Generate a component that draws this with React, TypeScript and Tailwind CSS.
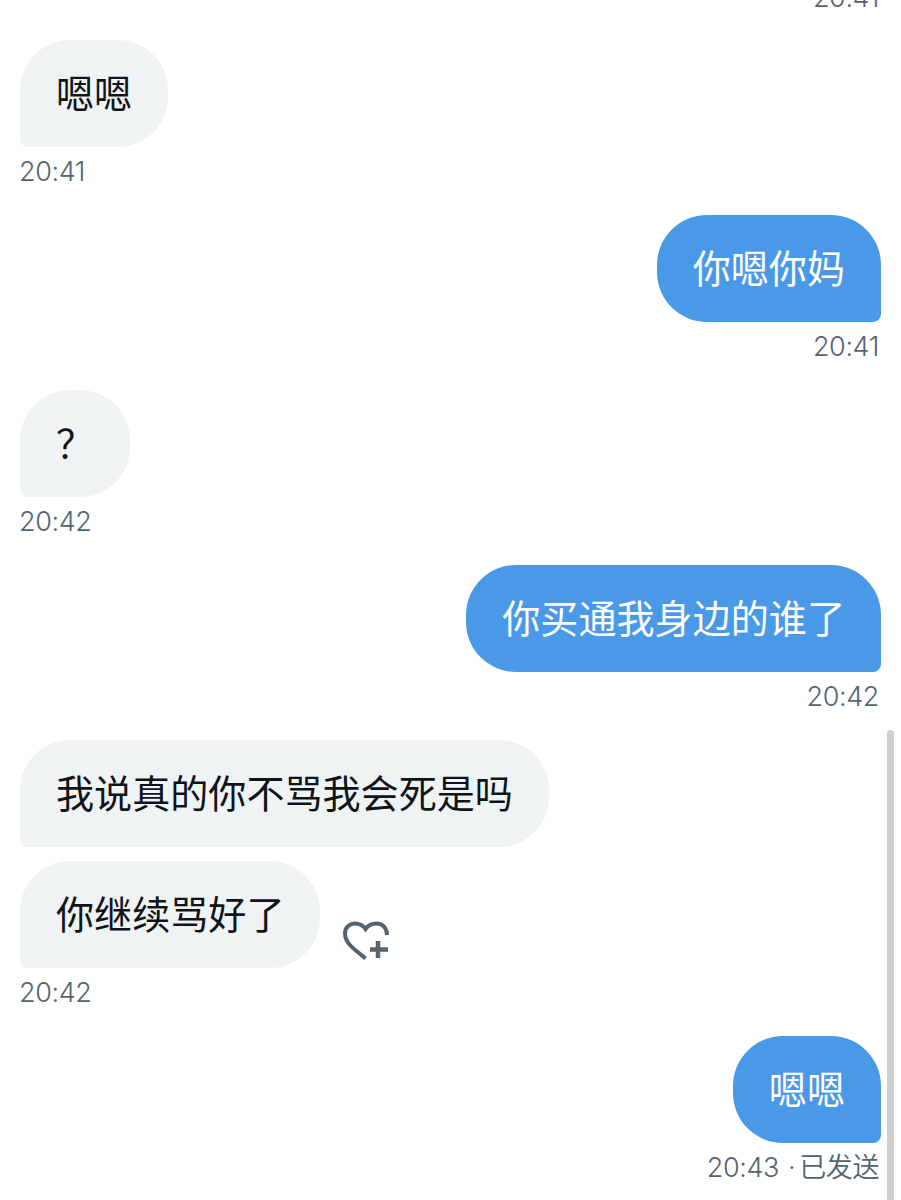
const FONT = "font-['Inter','Noto_Sans_CJK_SC',sans-serif]";

const Bubble = ({ text, mine }: { text: string; mine?: boolean }) => (
  <div
    className={
      mine
        ? "h-[107px] flex items-center px-[36px] pb-[4px] rounded-[50px] rounded-br-[8px] bg-[#4a99e9] text-white text-[38.1px]"
        : "h-[107px] flex items-center px-[36px] pb-[4px] rounded-[50px] rounded-bl-[8px] bg-[#eff3f4] text-[#0f1419] text-[38.1px]"
    }
  >
    <span className="font-['Noto_Sans_CJK_SC',sans-serif] whitespace-nowrap">{text}</span>
  </div>
);

const Time = ({ children }: { children: React.ReactNode }) => (
  <div className="mt-[5px] -ml-[1px] mr-[2px] h-[40px] leading-[40px] text-[27px] font-[350] tracking-[-0.4px] text-[#536471] whitespace-nowrap">{children}</div>
);

const HeartPlus = () => (
  <svg className="w-[48px] h-[42px] ml-[22px] mb-[6px] self-end" viewBox="0 0 48 42" fill="none" stroke="#536471" strokeWidth="4">
    <path d="M23.5 38.5C14 30 3 24 3 13.5C3 7 8 3.5 13 3.5C17.5 3.5 21 5.5 23.5 9C26 5.5 29.5 3.5 34.5 3.5C40.5 3.5 45 8 45 15" />
    <path d="M36 21V38M28 29.5H46" strokeWidth="4.5" />
  </svg>
);

export default function App() {
  return (
    <div className={`relative w-[901px] h-[1200px] bg-white overflow-hidden ${FONT}`}>
      {/* scrollbar */}
      <div className="absolute left-[887px] top-[730px] w-[7px] h-[480px] rounded-full bg-[#cfcfcf]" />

      <div className="flex flex-col px-[20px] -mt-[27px]">
        {/* partly scrolled off the top */}
        <div className="self-end mb-[22px]">
          <Time>20:41</Time>
        </div>

        <div className="self-start mb-[23px]">
          <Bubble text="嗯嗯" />
          <Time>20:41</Time>
        </div>

        <div className="self-end flex flex-col items-end mb-[23px]">
          <Bubble text="你嗯你妈" mine />
          <Time>20:41</Time>
        </div>

        <div className="self-start mb-[23px]">
          <div className="w-fit">
            <Bubble text="？" />
          </div>
          <Time>20:42</Time>
        </div>

        <div className="self-end flex flex-col items-end mb-[23px]">
          <Bubble text="你买通我身边的谁了" mine />
          <Time>20:42</Time>
        </div>

        <div className="self-start flex flex-col gap-[14px]">
          <div className="w-fit">
            <Bubble text="我说真的你不骂我会死是吗" />
          </div>
          <div className="flex">
            <Bubble text="你继续骂好了" />
            <HeartPlus />
          </div>
        </div>
        <div className="self-start mb-[23px]">
          <Time>20:42</Time>
        </div>

        <div className="self-end flex flex-col items-end">
          <Bubble text="嗯嗯" mine />
          <Time>
            20:43<span className="ml-[9px] mr-[4px]">·</span>已发送
          </Time>
        </div>
      </div>
    </div>
  );
}
